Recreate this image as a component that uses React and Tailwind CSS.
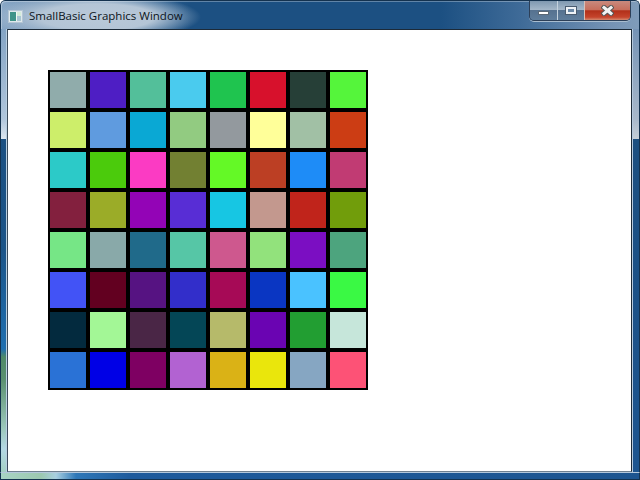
const ROWS = [
  ['#90acab', '#4e1ec4', '#53bf9a', '#4acbee', '#1fc44f', '#d7112c', '#263f37', '#55f53b'],
  ['#cdee6a', '#5f9bdf', '#0aa8d4', '#92cb81', '#93999e', '#ffff99', '#a1c0a5', '#cc3d14'],
  ['#2ccac8', '#4bcb0c', '#fb3bc3', '#728032', '#64f926', '#bc3f24', '#1e8cf7', '#c13b73'],
  ['#83203e', '#9bac28', '#9304b6', '#582dd5', '#17c6e3', '#c3988e', '#c0241b', '#719d0b'],
  ['#76e686', '#89a9a9', '#206a8a', '#56c6a6', '#ce588e', '#92e27c', '#7b0ec2', '#4da47e'],
  ['#4253f6', '#620020', '#561382', '#322eca', '#a60a56', '#0a36c2', '#4ac2ff', '#3af944'],
  ['#032a3e', '#a3f796', '#4a2646', '#044656', '#b6ba6a', '#6a04b2', '#229e32', '#c6e6da'],
  ['#2a72d6', '#0000e6', '#7e0062', '#b262d2', '#dab216', '#eae60c', '#86a6c2', '#fd5276'],
];

const WindowIcon = () => (
  <svg width="15" height="13" viewBox="0 0 15 13" className="shrink-0">
    <rect x="0.5" y="0.5" width="14" height="12" fill="#dfe8ec" stroke="#b4c6d4" />
    <rect x="2" y="2" width="6" height="9" fill="#3f9488" />
    <rect x="8" y="2" width="1" height="9" fill="#f2f8f4" />
    <rect x="9" y="2" width="4" height="4" fill="#d4ecd8" />
    <rect x="9" y="6" width="4" height="5" fill="#a9c6d2" />
  </svg>
);

const Controls = () => (
  <div className="flex h-[20px] ml-auto mr-[8px] rounded-b-[5px] border border-t-0 border-[#2c3f58] overflow-hidden shadow-[0_1px_0_#a9bdd0]">
    <div className="w-[28px] flex items-start justify-center border-r border-[#c4d2de] bg-[linear-gradient(#7f98b0,#a3b6c8_45%,#567290_50%,#5f7d9b)]">
      <div className="w-[11px] h-[4px] mt-[10px] bg-white border border-[#5a6876]" />
    </div>
    <div className="w-[26px] flex items-start justify-center bg-[linear-gradient(#7f98b0,#a3b6c8_45%,#567290_50%,#5f7d9b)]">
      <div className="w-[10px] h-[7px] mt-[6px] border-[2px] border-[#eef2f6] bg-[#6a88a6] shadow-[0_0_0_1px_#4a5c70]" />
    </div>
    <div className="w-[46px] flex items-center justify-center border-l border-[#d8c0b8] bg-[linear-gradient(#c88a7e,#c76f5d_45%,#b2301a_52%,#c5442c_85%,#d48a70)]">
      <svg width="13" height="11" viewBox="0 0 13 11">
        <path d="M3 2.5 L10 8.5 M10 2.5 L3 8.5" stroke="#555555" strokeWidth="5" strokeLinecap="square" />
        <path d="M3 2.5 L10 8.5 M10 2.5 L3 8.5" stroke="#f2f2f2" strokeWidth="3" strokeLinecap="square" />
      </svg>
    </div>
  </div>
);

export default function App() {
  return (
    <div className="w-[640px] h-[480px] flex flex-col overflow-hidden rounded-t-[5px] bg-white font-['Open_Sans','Noto_Sans',sans-serif]">
      <div className="h-[29px] shrink-0 flex items-start border-t border-x border-[#14324f] rounded-t-[5px] shadow-[inset_1px_1px_0_rgba(255,255,255,0.3)] bg-[radial-gradient(ellipse_104px_24px_at_96px_16px,#b9c9d9_0%,#b4c5d6_55%,rgba(150,175,200,0)_100%),linear-gradient(90deg,#8aa8c6_0%,#7a9bbc_30px,#4474a2_110px,#1c5082_190px,#1c5082_440px,#3f6b98_520px,#7593b5_610px,#7f9cba_100%)]">
        <div className="flex items-center pl-[7px] pt-[8px]">
          <WindowIcon />
          <span className="ml-[6px] text-[11.5px] leading-[14px] text-[#0c1420] whitespace-nowrap">SmallBasic Graphics Window</span>
        </div>
        <Controls />
      </div>

      <div className="flex-1 flex min-h-0">
        <div className="w-[7px] border-l border-r border-l-[#14324f] border-r-[#b8cee0] bg-[linear-gradient(#84a4c4_0px,#b0c6dc_90px,#dbe6f0_110px,#1b5082_110px,#1b5488_220px,#1f6fb0_320px,#4f8a68_328px,#5a9070_350px,#9cc8bc_400px,#b4d8e4_420px,#a4d0c4_443px)]" />
        <div className="flex-1 bg-white border border-t-[#1c2a38] border-l-[#3a4a5a] border-r-[#1c2a38] border-b-[#6f8090] pl-[40px] pt-[40px]">
          <div className="inline-grid grid-cols-8 gap-[4px] p-[2px] bg-black">
            {ROWS.flat().map((color, i) => (
              <div key={i} className="w-[36px] h-[36px]" style={{ background: color }} />
            ))}
          </div>
        </div>
        <div className="w-[8px] border-l border-r border-l-[#b4c8dc] border-r-[#14324f] bg-[linear-gradient(#7593b5_0px,#a8b8ca_90px,#c4ced8_110px,#1c4f80_110px,#1d5590_443px)]" />
      </div>

      <div className="h-[8px] shrink-0 border-t border-b border-x border-t-[#b4c8dc] border-b-[#14324f] border-x-[#14324f] bg-[linear-gradient(90deg,#a8d4c4_0%,#9cc8b0_40px,#a8cfe0_55px,#2f78b8_75px,#1d5a9c_130px,#1d5590_100%)]" />
    </div>
  );
}
